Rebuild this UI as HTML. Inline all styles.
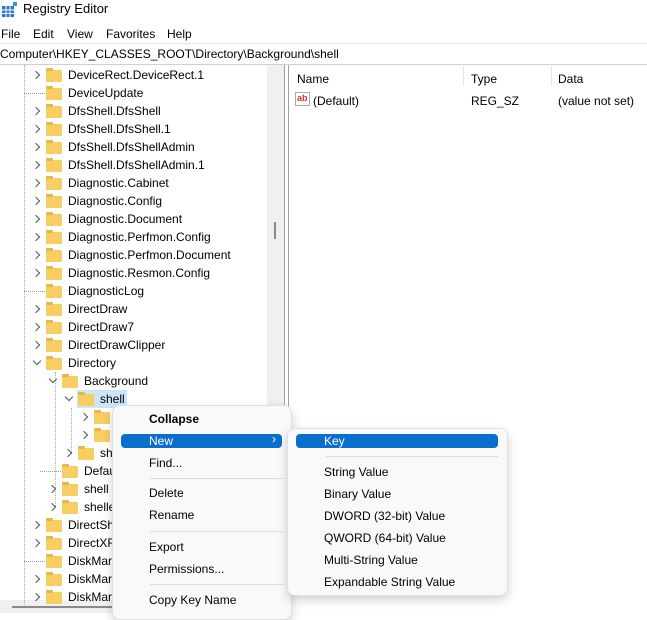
<!DOCTYPE html>
<html><head><style>
*{margin:0;padding:0;box-sizing:border-box}
body{width:647px;height:613px;background:#fff;font-family:"Liberation Sans",sans-serif;font-size:12px;color:#000;position:relative;overflow:hidden}
.a{position:absolute;white-space:nowrap}
.f{position:absolute;width:16px;height:12px;background:#f8cd62;border-radius:1px}
.f:before{content:"";position:absolute;left:0;top:-2px;width:7px;height:3px;background:#eab548;border-radius:1px 1px 0 0}
.c{position:absolute;width:6px;height:6px;border-right:1.3px solid #555;border-bottom:1.3px solid #555}
.r{transform:rotate(-45deg)}
.d{transform:rotate(45deg)}
.t{position:absolute;white-space:nowrap;font-size:12px}
.m{position:absolute;white-space:nowrap;font-size:12px}
.sep{position:absolute;height:1px;background:#dcdcdc}
.vl{position:absolute;width:0;border-left:1px dotted #aaa}
</style></head><body>
<!-- title -->
<svg class="a" style="left:2px;top:2px" width="16" height="16"><rect x="0" y="4" width="12" height="11" fill="#2b79c5"/><g stroke="#fff" stroke-width="1"><line x1="4" y1="4" x2="4" y2="15"/><line x1="8" y1="4" x2="8" y2="15"/><line x1="0" y1="8" x2="12" y2="8"/><line x1="0" y1="11.5" x2="12" y2="11.5"/></g><rect x="11" y="0" width="4" height="4" fill="#2b9fe0"/></svg>
<div class="a" style="left:23px;top:1px;font-size:13px">Registry Editor</div>
<div class="a" style="left:1px;top:27px">File</div>
<div class="a" style="left:33px;top:27px">Edit</div>
<div class="a" style="left:67px;top:27px">View</div>
<div class="a" style="left:106px;top:27px">Favorites</div>
<div class="a" style="left:167px;top:27px">Help</div>
<div class="a" style="left:0;top:43px;width:647px;height:1px;background:#e6e6e6"></div>
<div class="a" style="left:0;top:47px;font-size:12px">Computer\HKEY_CLASSES_ROOT\Directory\Background\shell</div>
<div class="a" style="left:0;top:64px;width:647px;height:1px;background:#d0d0d0"></div>
<!-- tree scrollbar -->
<div class="a" style="left:267px;top:65px;width:17px;height:537px;background:#f0f0f0"></div>
<div class="a" style="left:274px;top:222px;width:2px;height:17px;background:#8a8a8a"></div>
<div class="a" style="left:284px;top:65px;width:1px;height:548px;background:#a0a0a0"></div>
<div class="a" style="left:288px;top:65px;width:1px;height:548px;background:#a0a0a0"></div>
<!-- bottom scrollbar -->
<div class="a" style="left:0;top:600px;width:284px;height:13px;background:#f0f0f0"></div>
<div class="a" style="left:12px;top:606px;width:280px;height:2px;background:#8a8a8a"></div>
<!-- right pane -->
<div class="a" style="left:297px;top:72px">Name</div>
<div class="a" style="left:463px;top:66px;width:1px;height:20px;background:#e5e5e5"></div>
<div class="a" style="left:471px;top:72px">Type</div>
<div class="a" style="left:551px;top:66px;width:1px;height:20px;background:#e5e5e5"></div>
<div class="a" style="left:558px;top:72px">Data</div>
<div class="a" style="left:295px;top:92px;width:15px;height:14px;border:1px solid #aaa;background:#fff;color:#c0392b;font-size:9px;font-weight:bold;line-height:11px;padding-left:1px">ab</div>
<div class="a" style="left:313px;top:94px">(Default)</div>
<div class="a" style="left:471px;top:94px">REG_SZ</div>
<div class="a" style="left:558px;top:94px">(value not set)</div>
<!-- selection + guide lines -->
<div class="a" style="left:77px;top:390px;width:50px;height:18px;background:#cce4f7"></div>
<div class="vl" style="left:24px;top:65px;height:540px"></div>
<div class="vl" style="left:55px;top:372px;height:136px"></div>
<div class="vl" style="left:71px;top:408px;height:46px"></div>
<!-- tree -->
<div id="tree"></div>
<script>
var rows=[
[1,'DeviceRect.DeviceRect.1','r'],[1,'DeviceUpdate',''],[1,'DfsShell.DfsShell','r'],[1,'DfsShell.DfsShell.1','r'],
[1,'DfsShell.DfsShellAdmin','r'],[1,'DfsShell.DfsShellAdmin.1','r'],[1,'Diagnostic.Cabinet','r'],[1,'Diagnostic.Config','r'],
[1,'Diagnostic.Document','r'],[1,'Diagnostic.Perfmon.Config','r'],[1,'Diagnostic.Perfmon.Document','r'],[1,'Diagnostic.Resmon.Config','r'],
[1,'DiagnosticLog',''],[1,'DirectDraw','r'],[1,'DirectDraw7','r'],[1,'DirectDrawClipper','r'],
[1,'Directory','d'],[2,'Background','d'],[3,'shell','d'],[4,'','r'],[4,'','r'],[3,'sh','r'],[2,'Defau',''],[2,'shell','r'],[2,'shelle','r'],
[1,'DirectSh','r'],[1,'DirectXF','r'],[1,'DiskMar',''],[1,'DiskMar','r'],[1,'DiskMar','r']];
var h='';
rows.forEach(function(r,i){var cy=75+i*18;var L=r[0];var cx=21+L*16;var fx=cx+9;
if(r[2]=='r')h+='<div class="c r" style="left:'+(cx-4)+'px;top:'+(cy-3)+'px"></div>';
if(r[2]=='d')h+='<div class="c d" style="left:'+(cx-3)+'px;top:'+(cy-5)+'px"></div>';
if(r[2]=='')h+='<div class="a" style="left:'+(cx-13)+'px;top:'+cy+'px;width:21px;border-top:1px dotted #999"></div>';
h+='<div class="f" style="left:'+fx+'px;top:'+(cy-5)+'px"></div>';
h+='<div class="t" style="left:'+(fx+22)+'px;top:'+(cy-7)+'px">'+r[1]+'</div>';});
document.getElementById('tree').innerHTML=h;
</script>
<!-- context menu -->
<div class="a" style="left:112px;top:405px;width:180px;height:215px;background:#f9f9f9;border:1px solid #e0e0e0;border-radius:8px;box-shadow:0 4px 10px rgba(0,0,0,.18)"></div>
<div class="m" style="left:149px;top:412px;font-weight:bold">Collapse</div>
<div class="a" style="left:121px;top:434px;width:161px;height:14px;background:#0a6fcc;border-radius:4px"></div>
<div class="m" style="left:149px;top:434px;color:#fff">New</div>
<div class="m" style="left:272px;top:432px;color:#fff;font-size:12px">›</div>
<div class="m" style="left:149px;top:456px">Find...</div>
<div class="sep" style="left:150px;top:478px;width:133px"></div>
<div class="m" style="left:149px;top:486px">Delete</div>
<div class="m" style="left:149px;top:508px">Rename</div>
<div class="sep" style="left:150px;top:531px;width:133px"></div>
<div class="m" style="left:149px;top:540px">Export</div>
<div class="m" style="left:149px;top:562px">Permissions...</div>
<div class="sep" style="left:150px;top:584px;width:133px"></div>
<div class="m" style="left:149px;top:593px">Copy Key Name</div>
<!-- submenu -->
<div class="a" style="left:287px;top:428px;width:221px;height:168px;background:#f9f9f9;border:1px solid #e0e0e0;border-radius:8px;box-shadow:0 4px 10px rgba(0,0,0,.18)"></div>
<div class="a" style="left:296px;top:434px;width:202px;height:14px;background:#0a6fcc;border-radius:4px"></div>
<div class="m" style="left:324px;top:434px;color:#fff">Key</div>
<div class="sep" style="left:326px;top:456px;width:172px"></div>
<div class="m" style="left:324px;top:465px">String Value</div>
<div class="m" style="left:324px;top:487px">Binary Value</div>
<div class="m" style="left:324px;top:509px">DWORD (32-bit) Value</div>
<div class="m" style="left:324px;top:531px">QWORD (64-bit) Value</div>
<div class="m" style="left:324px;top:553px">Multi-String Value</div>
<div class="m" style="left:324px;top:575px">Expandable String Value</div>
</body></html>
